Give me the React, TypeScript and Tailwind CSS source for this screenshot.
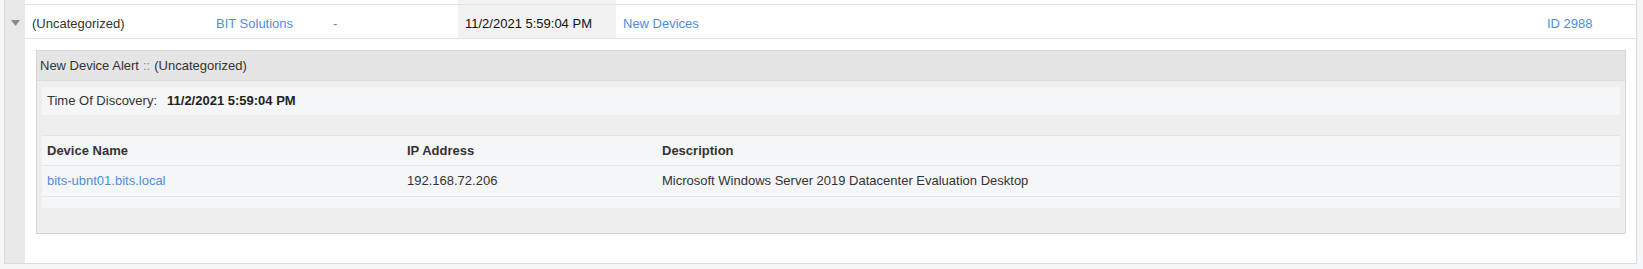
import React from 'react'

const font = { fontFamily: '"Liberation Sans", Arial, sans-serif' }

const devices = [
  {
    name: 'bits-ubnt01.bits.local',
    ip: '192.168.72.206',
    description: 'Microsoft Windows Server 2019 Datacenter Evaluation Desktop',
  },
]

function AlertRow() {
  return (
    <div className="flex h-[34px] items-stretch border-b border-[#e3e3e3] text-[13px]">
      <div className="flex w-[184px] items-center pt-[5px] pl-[7px] text-[#333]">(Uncategorized)</div>
      <div className="flex w-[117px] items-center pt-[5px] pl-[7px] text-[#4f8ddc]">BIT Solutions</div>
      <div className="flex w-[132px] items-center pt-[5px] pl-[7px] text-[#4f8ddc]">-</div>
      <div className="flex w-[158px] items-center bg-[#f2f2f2] pt-[5px] pl-[7px] text-[#111]">11/2/2021 5:59:04 PM</div>
      <div className="flex flex-1 items-center pt-[5px] pl-[7px] text-[#4f8ddc]">New Devices</div>
      <div className="flex w-[96px] items-center pt-[5px] pl-[7px] text-[#4f8ddc]">ID 2988</div>
    </div>
  )
}

function AlertPanel() {
  return (
    <div className="border border-[#d6d6d6]">
      <div className="flex h-[30px] items-center border-b border-[#dcdcdc] bg-[#e5e5e5] pl-[3px] text-[13px] text-[#333]">
        New Device Alert <span className="mx-1 text-[#888]">::</span> (Uncategorized)
      </div>
      <div className="bg-[#eeeeee] px-[5px] pt-[6px] pb-[25px]">
        <div className="flex h-[28px] items-center bg-[#f5f6f8] pl-[5px] text-[13px] text-[#333]">
          Time Of Discovery:
          <span className="ml-[10px] font-bold text-[#222]">11/2/2021 5:59:04 PM</span>
        </div>
        <div className="mt-[20px] bg-[#f5f6f8] pb-[11px] text-[13px]">
          <div className="flex h-[31px] items-center border-y border-[#e2e4e6] font-bold text-[#333]">
            <div className="w-[360px] pl-[5px]">Device Name</div>
            <div className="w-[255px] pl-[5px]">IP Address</div>
            <div className="flex-1 pl-[5px]">Description</div>
          </div>
          {devices.map(d => (
            <div key={d.name} className="flex h-[31px] items-center border-b border-[#e2e4e6] text-[#333]">
              <div className="w-[360px] pl-[5px] text-[#4f8ddc]">{d.name}</div>
              <div className="w-[255px] pl-[5px]">{d.ip}</div>
              <div className="flex-1 pl-[5px]">{d.description}</div>
            </div>
          ))}
        </div>
      </div>
    </div>
  )
}

export default function App() {
  return (
    <div className="h-[269px] bg-[#f5f6f8] pl-[4px] pr-[6px]" style={font}>
      <div className="flex h-[264px] border-x border-b border-[#dcdcdc] bg-white">
        <div className="w-[20px] shrink-0 bg-[#e8e8e8]">
          <svg width="20" height="40" viewBox="0 0 20 40" className="block">
            <polygon points="6,20 15,20 10.5,26" fill="#8a8a8a" />
          </svg>
        </div>
        <div className="flex-1">
          <div className="flex h-[5px] border-b border-[#e3e3e3]">
            <div className="w-[433px]" />
            <div className="w-[158px] bg-[#f2f2f2]" />
          </div>
          <AlertRow />
          <div className="pt-[11px] pr-[10px] pl-[11px]">
            <AlertPanel />
          </div>
        </div>
      </div>
    </div>
  )
}
